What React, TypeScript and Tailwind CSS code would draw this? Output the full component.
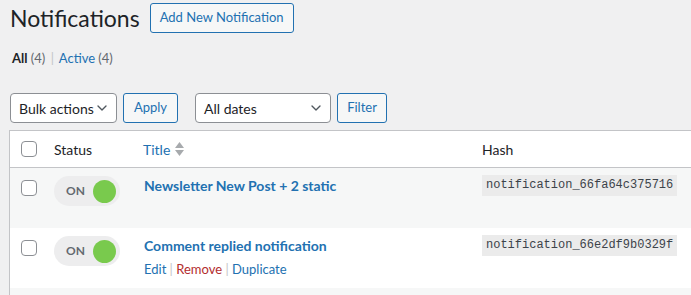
import { ChevronDown } from "lucide-react";

const font = { fontFamily: 'Lato, "Noto Sans", sans-serif' };

function Toggle() {
  return (
    <div className="flex h-[30px] w-[66px] items-center justify-between rounded-full bg-[#ededee] pl-[12px] pr-[4px]">
      <span className="text-[12px] font-bold text-[#646970]">ON</span>
      <span className="h-[23px] w-[23px] rounded-full bg-[#79ca4d]" />
    </div>
  );
}

function Checkbox() {
  return <span className="block h-[16px] w-[16px] rounded-[4px] border border-[#8c8f94] bg-white" />;
}

function Row({ title, hash, striped, actions }: { title: string; hash: string; striped?: boolean; actions?: boolean }) {
  return (
    <div className={`flex h-[60px] ${striped ? "bg-[#f6f7f7]" : "bg-white"}`}>
      <div className="w-[44px] pl-[11px] pt-[12px]">
        <Checkbox />
      </div>
      <div className="w-[89px] pt-[8px]">
        <Toggle />
      </div>
      <div className="w-[339px] pl-[1px] pt-[8px]">
        <div className="text-[14px] font-bold leading-[20px] text-[#2271b1]">{title}</div>
        {actions && (
          <div className="mt-[4px] text-[13px] leading-[18px] text-[#c3c4c7]">
            <span className="text-[#2271b1]">Edit</span> | <span className="text-[#b32d2e]">Remove</span> |{" "}
            <span className="text-[#2271b1]">Duplicate</span>
          </div>
        )}
      </div>
      <div className="pt-[7px]">
        <code
          className="block bg-[#ebebeb] px-[4px] text-[12px] leading-[21px] text-[#3c434a]"
          style={{ fontFamily: '"Liberation Mono", "DejaVu Sans Mono", monospace' }}
        >
          {hash}
        </code>
      </div>
    </div>
  );
}

export default function App() {
  return (
    <div className="h-[295px] w-[691px] overflow-hidden bg-[#f0f0f1] text-[#1d2327]" style={font}>
      <div className="flex items-center gap-[10px] pl-[10px] pt-[3px]">
        <h1 className="text-[23px] leading-[29px] font-normal">Notifications</h1>
        <button className="h-[30px] whitespace-nowrap rounded-[3px] border border-[#2271b1] bg-[#f6f7f7] px-[9px] text-[13px] text-[#2271b1]">
          Add New Notification
        </button>
      </div>
      <div className="mt-[16px] pl-[12px] text-[13px] leading-[18px] text-[#646970]">
        <span className="font-bold text-[#1d2327]">All</span> (4) <span className="mx-[2px] text-[#c3c4c7]">|</span>{" "}
        <span className="text-[#2271b1]">Active</span> (4)
      </div>
      <div className="mt-[26px] flex items-center pl-[10px]">
        <div className="flex h-[30px] w-[107px] items-center justify-between whitespace-nowrap rounded-[4px] border border-[#8c8f94] bg-white pl-[8px] pr-[6px] text-[14px]">
          Bulk actions
          <ChevronDown size={16} strokeWidth={2} className="shrink-0 text-[#50575e]" />
        </div>
        <button className="ml-[6px] h-[30px] w-[55px] rounded-[3px] border border-[#2271b1] bg-[#f6f7f7] text-[13px] text-[#2271b1]">
          Apply
        </button>
        <div className="ml-[17px] flex h-[30px] w-[136px] items-center justify-between whitespace-nowrap rounded-[4px] border border-[#8c8f94] bg-white pl-[8px] pr-[6px] text-[14px]">
          All dates
          <ChevronDown size={16} strokeWidth={2} className="shrink-0 text-[#50575e]" />
        </div>
        <button className="ml-[6px] h-[30px] w-[50px] rounded-[3px] border border-[#2271b1] bg-[#f6f7f7] text-[13px] text-[#2271b1]">
          Filter
        </button>
      </div>
      <div className="ml-[9px] mt-[7px] border-l border-t border-[#c3c4c7] bg-white">
        <div className="flex h-[37px] items-center border-b border-[#c3c4c7] text-[14px]">
          <div className="w-[44px] pl-[11px]">
            <Checkbox />
          </div>
          <div className="w-[89px]">Status</div>
          <div className="flex w-[339px] items-center gap-[5px] text-[#2271b1]">
            Title
            <svg width="9" height="14" viewBox="0 0 9 14">
              <path d="M4.5 0L9 6H0z" fill="#a7aaad" />
              <path d="M4.5 14L9 8H0z" fill="#a7aaad" />
            </svg>
          </div>
          <div>Hash</div>
        </div>
        <Row title="Newsletter New Post + 2 static" hash="notification_66fa64c375716" striped />
        <Row title="Comment replied notification" hash="notification_66e2df9b0329f" actions />
        <div className="h-[60px] bg-[#f6f7f7]" />
      </div>
    </div>
  );
}
